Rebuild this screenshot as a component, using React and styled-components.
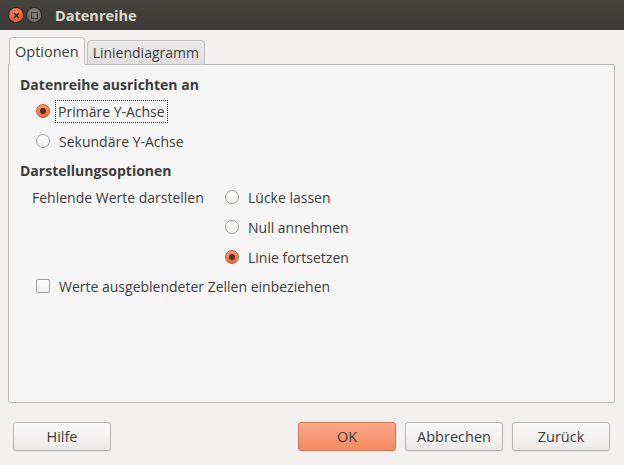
import React, { useState } from 'react'
import styled, { createGlobalStyle } from 'styled-components'

const GlobalStyle = createGlobalStyle`
    html, body {
        margin: 0;
        padding: 0;
        background: #f2f1f0;
    }
    * {
        box-sizing: border-box;
    }
`

const Window = styled.div`
    width: 624px;
    height: 465px;
    display: flex;
    flex-direction: column;
    background: #f2f1f0;
    font-family: "Open Sans", "DejaVu Sans", sans-serif;
    font-size: 14px;
    color: #3c3c3c;
    overflow: hidden;
`

const TitleBar = styled.div`
    height: 30px;
    flex: none;
    display: flex;
    align-items: center;
    padding-left: 9px;
    gap: 4px;
    background: linear-gradient(#45443f, #3b3a36);
`

const WinButton = styled.div`
    width: 14px;
    height: 14px;
    border-radius: 50%;
    display: flex;
    align-items: center;
    justify-content: center;
    background: ${p => p.close
        ? 'radial-gradient(circle at 50% 35%, #f48a5c, #df4b1f)'
        : 'radial-gradient(circle at 50% 35%, #8a8985, #5f5e5a)'};
    box-shadow: 0 0 0 1px rgba(0, 0, 0, 0.35);
`

const Title = styled.div`
    margin-left: 10px;
    font-weight: bold;
    font-size: 14.5px;
    color: #dfdbd2;
`

const Body = styled.div`
    flex: 1;
    display: flex;
    flex-direction: column;
    padding: 7px 8px 0 8px;
`

const TabBar = styled.div`
    display: flex;
    align-items: flex-end;
    padding-left: 1px;
    gap: 2px;
    height: 28px;
    margin-bottom: -1px;
    position: relative;
    z-index: 1;
`

const Tab = styled.div`
    height: ${p => (p.active ? '28px' : '25px')};
    padding: 0 5px;
    display: flex;
    align-items: center;
    border: 1px solid #c2c0bc;
    border-bottom: ${p => (p.active ? '1px solid #f6f6f6' : '1px solid #c2c0bc')};
    border-radius: 4px 4px 0 0;
    background: ${p => (p.active ? '#f6f6f6' : 'linear-gradient(#ecebea, #e0dfdd)')};
    font-size: ${p => (p.active ? '14.5px' : '14px')};
`

const Panel = styled.div`
    height: 339px;
    margin-right: 1px;
    background: #f6f6f6;
    border: 1px solid #b8b6b2;
    border-radius: 0 2px 2px 2px;
    padding: 9px 11px;
    display: flex;
    flex-direction: column;
`

const Heading = styled.div`
    font-weight: bold;
    height: 22px;
    line-height: 22px;
    margin-top: ${p => (p.spaced ? '4px' : '0')};
`

const Row = styled.label`
    display: flex;
    align-items: center;
    height: ${p => p.h || 30}px;
    padding-left: ${p => p.indent || 0}px;
    gap: 9px;
`

const Radio = styled.span`
    width: 14px;
    height: 14px;
    flex: none;
    border-radius: 50%;
    display: flex;
    align-items: center;
    justify-content: center;
    border: 1px solid ${p => (p.checked ? '#c45a30' : '#a09e9a')};
    background: ${p => (p.checked
        ? 'linear-gradient(#f59a70, #e8693c)'
        : 'linear-gradient(#ffffff, #f0efee)')};

    &::after {
        content: '';
        display: ${p => (p.checked ? 'block' : 'none')};
        width: 6px;
        height: 6px;
        border-radius: 50%;
        background: #5a2a18;
    }
`

const Checkbox = styled.span`
    width: 14px;
    height: 14px;
    flex: none;
    border-radius: 2px;
    border: 1px solid #a09e9a;
    background: linear-gradient(#ffffff, #f0efee);
`

const Focused = styled.span`
    outline: 1px dotted #222;
    outline-offset: 1px;
    padding: 0 1px;
    margin-left: -2px;
`

const Split = styled.div`
    display: grid;
    grid-template-columns: 193px auto;
    padding-left: 12px;
`

const Caption = styled.div`
    height: 30px;
    display: flex;
    align-items: center;
`

const Options = styled.div`
    display: flex;
    flex-direction: column;
`

const Footer = styled.div`
    display: flex;
    align-items: center;
    padding: 19px 6px 0 5px;
    gap: 9px;
`

const Spacer = styled.div`
    flex: 1;
`

const Button = styled.button`
    width: 98px;
    height: 29px;
    font-family: inherit;
    font-size: 14.5px;
    color: #3c3c3c;
    border-radius: 3px;
    border: 1px solid ${p => (p.primary ? '#c8755a' : '#b7b5b1')};
    background: ${p => (p.primary
        ? 'linear-gradient(#fba887, #f48a62)'
        : 'linear-gradient(#fafafa, #ebeae8)')};
    box-shadow: 0 1px 1px rgba(0, 0, 0, 0.08);
`

const App = () => {
    const [axis, setAxis] = useState('primary')
    const [missing, setMissing] = useState('continue')

    return (
        <Window>
            <GlobalStyle />
            <TitleBar>
                <WinButton close>
                    <svg width="7" height="7" viewBox="0 0 7 7">
                        <path d="M1 1L6 6M6 1L1 6" stroke="#3a1a0e" strokeWidth="1.4" />
                    </svg>
                </WinButton>
                <WinButton>
                    <svg width="7" height="7" viewBox="0 0 7 7">
                        <rect x="0.5" y="0.5" width="6" height="6" fill="none" stroke="#3a3935" strokeWidth="1.2" />
                    </svg>
                </WinButton>
                <Title>Datenreihe</Title>
            </TitleBar>
            <Body>
                <TabBar>
                    <Tab active>Optionen</Tab>
                    <Tab>Liniendiagramm</Tab>
                </TabBar>
                <Panel>
                    <Heading>Datenreihe ausrichten an</Heading>
                    <Row indent={16} onClick={() => setAxis('primary')}>
                        <Radio checked={axis === 'primary'} />
                        <Focused>Primäre Y-Achse</Focused>
                    </Row>
                    <Row indent={16} onClick={() => setAxis('secondary')}>
                        <Radio checked={axis === 'secondary'} />
                        Sekundäre Y-Achse
                    </Row>
                    <Heading spaced>Darstellungsoptionen</Heading>
                    <Split>
                        <Caption>Fehlende Werte darstellen</Caption>
                        <Options>
                            <Row onClick={() => setMissing('gap')}>
                                <Radio checked={missing === 'gap'} />
                                Lücke lassen
                            </Row>
                            <Row onClick={() => setMissing('zero')}>
                                <Radio checked={missing === 'zero'} />
                                Null annehmen
                            </Row>
                            <Row onClick={() => setMissing('continue')}>
                                <Radio checked={missing === 'continue'} />
                                Linie fortsetzen
                            </Row>
                        </Options>
                    </Split>
                    <Row indent={16} h={28}>
                        <Checkbox />
                        Werte ausgeblendeter Zellen einbeziehen
                    </Row>
                </Panel>
                <Footer>
                    <Button>Hilfe</Button>
                    <Spacer />
                    <Button primary>OK</Button>
                    <Button>Abbrechen</Button>
                    <Button>Zurück</Button>
                </Footer>
            </Body>
        </Window>
    )
}

export default App
